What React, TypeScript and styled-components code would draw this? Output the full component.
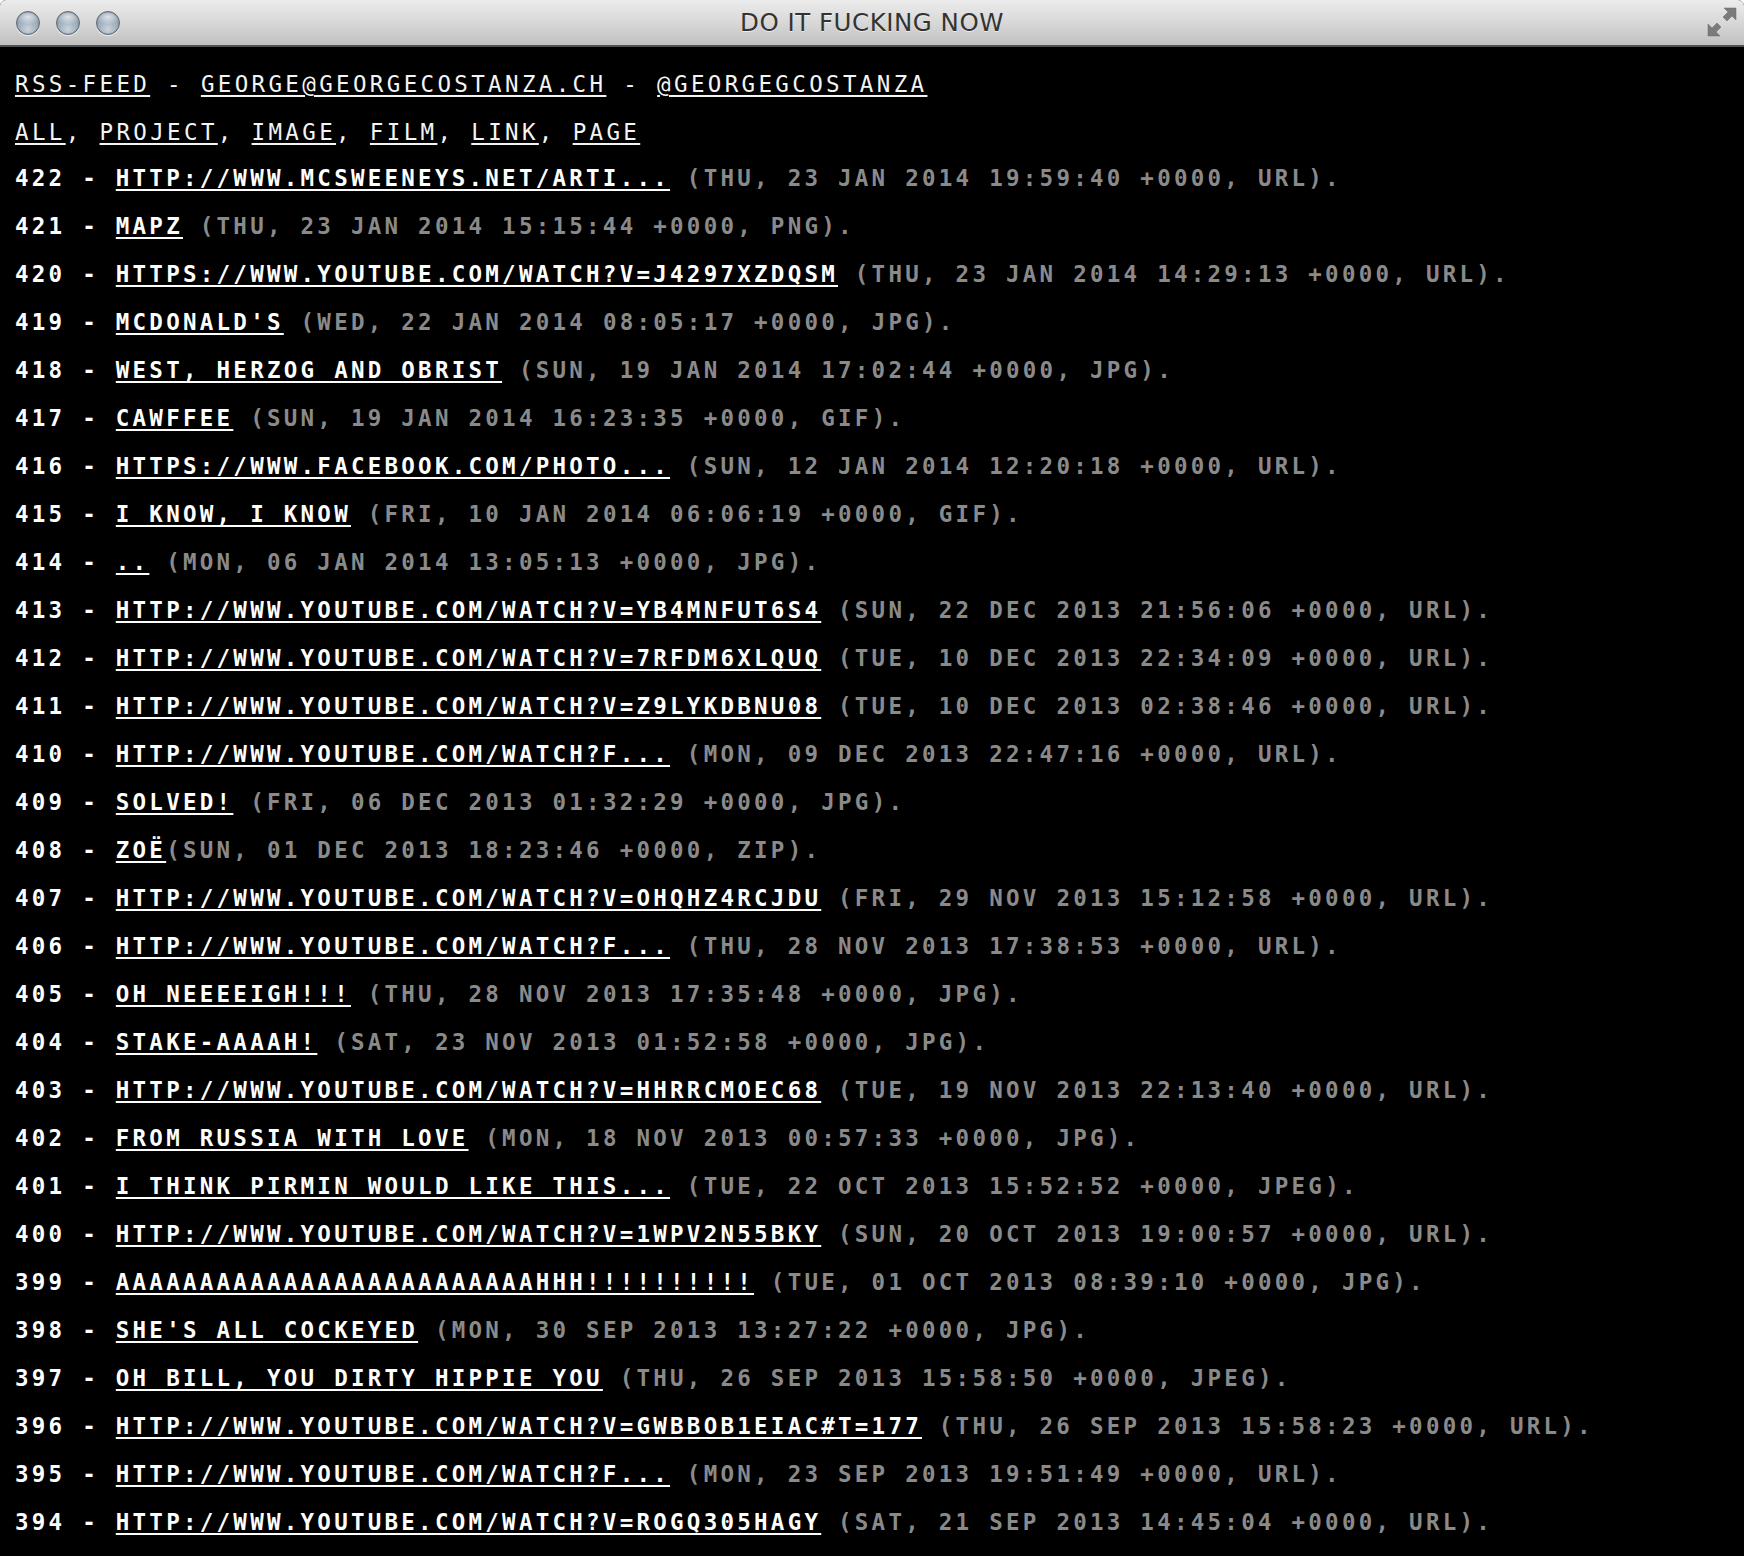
import React from "react";
import styled, { createGlobalStyle } from "styled-components";

const Global = createGlobalStyle`
  html, body { margin: 0; padding: 0; background: #ffffff; }
  #root { min-height: 100vh; }
`;

const Window = styled.div`
  min-height: 1556px;
  background: #000;
  border-radius: 6px 6px 0 0;
  overflow: hidden;
  display: flex;
  flex-direction: column;
`;

const TitleBar = styled.div`
  height: 45px;
  border-bottom: 2px solid #505050;
  background: linear-gradient(#ececec, #d6d6d6 55%, #c0c0c0);
  display: grid;
  grid-template-columns: 1fr auto 1fr;
  align-items: center;
  padding: 0 6px;
`;

const Lights = styled.div`
  display: flex;
  gap: 16px;
  align-items: center;
  margin-left: 10px;
`;

const Light = styled.span`
  width: 22px;
  height: 22px;
  border-radius: 50%;
  border: 1px solid #5d6974;
  background:
    radial-gradient(ellipse 60% 35% at 50% 22%, rgba(255, 255, 255, 0.7), rgba(255, 255, 255, 0) 100%),
    radial-gradient(circle at 50% 78%, #cbd5dd 0%, #9fafbc 45%, #7a8b99 100%);
  box-shadow: 0 1px 0 rgba(255, 255, 255, 0.7), inset 0 0 1px rgba(0, 0, 0, 0.4);
`;

const Title = styled.div`
  font-family: "DejaVu Sans", "Open Sans", sans-serif;
  font-size: 24.5px;
  color: #333;
  text-shadow: 0 1px 0 rgba(255, 255, 255, 0.6);
  letter-spacing: 0.5px;
`;

const Resize = styled.div`
  justify-self: end;
  display: flex;
  align-items: center;
  margin-top: -2px;
`;

const Content = styled.div`
  padding: 13px 0 0 15px;
  font-family: "DejaVu Sans Mono", "Liberation Mono", monospace;
  font-size: 22.5px;
  letter-spacing: 3.25px;
  line-height: 48px;
  color: #fff;
  white-space: nowrap;
`;

const HeaderLine = styled.div`
  font-weight: 400;
  color: #f4f4f4;
  letter-spacing: 3.35px;
`;

const Link = styled.a`
  color: inherit;
  text-decoration: underline;
  text-decoration-thickness: 2px;
  text-underline-offset: 3px;
  cursor: pointer;
`;

const List = styled.div`
  margin-top: -2px;
  display: flex;
  flex-direction: column;
`;

const Row = styled.div`
  font-weight: 700;
  color: #fff;
`;

const Meta = styled.span`
  color: #8a8a8a;
`;

type Entry = { n: number; title: string; date: string; type: string; tight?: boolean };

const entries: Entry[] = [
  { n: 422, title: "HTTP://WWW.MCSWEENEYS.NET/ARTI...", date: "THU, 23 JAN 2014 19:59:40 +0000", type: "URL" },
  { n: 421, title: "MAPZ", date: "THU, 23 JAN 2014 15:15:44 +0000", type: "PNG" },
  { n: 420, title: "HTTPS://WWW.YOUTUBE.COM/WATCH?V=J4297XZDQSM", date: "THU, 23 JAN 2014 14:29:13 +0000", type: "URL" },
  { n: 419, title: "MCDONALD'S", date: "WED, 22 JAN 2014 08:05:17 +0000", type: "JPG" },
  { n: 418, title: "WEST, HERZOG AND OBRIST", date: "SUN, 19 JAN 2014 17:02:44 +0000", type: "JPG" },
  { n: 417, title: "CAWFFEE", date: "SUN, 19 JAN 2014 16:23:35 +0000", type: "GIF" },
  { n: 416, title: "HTTPS://WWW.FACEBOOK.COM/PHOTO...", date: "SUN, 12 JAN 2014 12:20:18 +0000", type: "URL" },
  { n: 415, title: "I KNOW, I KNOW", date: "FRI, 10 JAN 2014 06:06:19 +0000", type: "GIF" },
  { n: 414, title: "..", date: "MON, 06 JAN 2014 13:05:13 +0000", type: "JPG" },
  { n: 413, title: "HTTP://WWW.YOUTUBE.COM/WATCH?V=YB4MNFUT6S4", date: "SUN, 22 DEC 2013 21:56:06 +0000", type: "URL" },
  { n: 412, title: "HTTP://WWW.YOUTUBE.COM/WATCH?V=7RFDM6XLQUQ", date: "TUE, 10 DEC 2013 22:34:09 +0000", type: "URL" },
  { n: 411, title: "HTTP://WWW.YOUTUBE.COM/WATCH?V=Z9LYKDBNU08", date: "TUE, 10 DEC 2013 02:38:46 +0000", type: "URL" },
  { n: 410, title: "HTTP://WWW.YOUTUBE.COM/WATCH?F...", date: "MON, 09 DEC 2013 22:47:16 +0000", type: "URL" },
  { n: 409, title: "SOLVED!", date: "FRI, 06 DEC 2013 01:32:29 +0000", type: "JPG" },
  { n: 408, title: "ZOË", date: "SUN, 01 DEC 2013 18:23:46 +0000", type: "ZIP", tight: true },
  { n: 407, title: "HTTP://WWW.YOUTUBE.COM/WATCH?V=OHQHZ4RCJDU", date: "FRI, 29 NOV 2013 15:12:58 +0000", type: "URL" },
  { n: 406, title: "HTTP://WWW.YOUTUBE.COM/WATCH?F...", date: "THU, 28 NOV 2013 17:38:53 +0000", type: "URL" },
  { n: 405, title: "OH NEEEEIGH!!!", date: "THU, 28 NOV 2013 17:35:48 +0000", type: "JPG" },
  { n: 404, title: "STAKE-AAAAH!", date: "SAT, 23 NOV 2013 01:52:58 +0000", type: "JPG" },
  { n: 403, title: "HTTP://WWW.YOUTUBE.COM/WATCH?V=HHRRCMOEC68", date: "TUE, 19 NOV 2013 22:13:40 +0000", type: "URL" },
  { n: 402, title: "FROM RUSSIA WITH LOVE", date: "MON, 18 NOV 2013 00:57:33 +0000", type: "JPG" },
  { n: 401, title: "I THINK PIRMIN WOULD LIKE THIS...", date: "TUE, 22 OCT 2013 15:52:52 +0000", type: "JPEG" },
  { n: 400, title: "HTTP://WWW.YOUTUBE.COM/WATCH?V=1WPV2N55BKY", date: "SUN, 20 OCT 2013 19:00:57 +0000", type: "URL" },
  { n: 399, title: "AAAAAAAAAAAAAAAAAAAAAAAAAHHH!!!!!!!!!!", date: "TUE, 01 OCT 2013 08:39:10 +0000", type: "JPG" },
  { n: 398, title: "SHE'S ALL COCKEYED", date: "MON, 30 SEP 2013 13:27:22 +0000", type: "JPG" },
  { n: 397, title: "OH BILL, YOU DIRTY HIPPIE YOU", date: "THU, 26 SEP 2013 15:58:50 +0000", type: "JPEG" },
  { n: 396, title: "HTTP://WWW.YOUTUBE.COM/WATCH?V=GWBBOB1EIAC#T=177", date: "THU, 26 SEP 2013 15:58:23 +0000", type: "URL" },
  { n: 395, title: "HTTP://WWW.YOUTUBE.COM/WATCH?F...", date: "MON, 23 SEP 2013 19:51:49 +0000", type: "URL" },
  { n: 394, title: "HTTP://WWW.YOUTUBE.COM/WATCH?V=ROGQ305HAGY", date: "SAT, 21 SEP 2013 14:45:04 +0000", type: "URL" },
];

const categories = ["ALL", "PROJECT", "IMAGE", "FILM", "LINK", "PAGE"];

const ResizeIcon = () => (
  <svg width="32" height="32" viewBox="0 0 32 32">
    <g fill="#7b7b7b" stroke="#6a6a6a" strokeWidth="0.5">
      <path d="M30 2 L30 14 L26 10 L21 15 L17 11 L22 6 L18 2 Z" />
      <path d="M2 30 L2 18 L6 22 L11 17 L15 21 L10 26 L14 30 Z" />
    </g>
  </svg>
);

export default function App() {
  return (
    <>
      <Global />
      <Window>
        <TitleBar>
          <Lights>
            <Light />
            <Light />
            <Light />
          </Lights>
          <Title>DO IT FUCKING NOW</Title>
          <Resize>
            <ResizeIcon />
          </Resize>
        </TitleBar>
        <Content>
          <HeaderLine>
            <Link>RSS-FEED</Link> - <Link>GEORGE@GEORGECOSTANZA.CH</Link> - <Link>@GEORGEGCOSTANZA</Link>
          </HeaderLine>
          <HeaderLine>
            {categories.map((c, i) => (
              <React.Fragment key={c}>
                <Link>{c}</Link>
                {i < categories.length - 1 ? ", " : ""}
              </React.Fragment>
            ))}
          </HeaderLine>
          <List>
            {entries.map((e) => (
              <Row key={e.n}>
                {e.n} - <Link>{e.title}</Link>
                {e.tight ? "" : " "}
                <Meta>
                  ({e.date}, {e.type}).
                </Meta>
              </Row>
            ))}
          </List>
        </Content>
      </Window>
    </>
  );
}
